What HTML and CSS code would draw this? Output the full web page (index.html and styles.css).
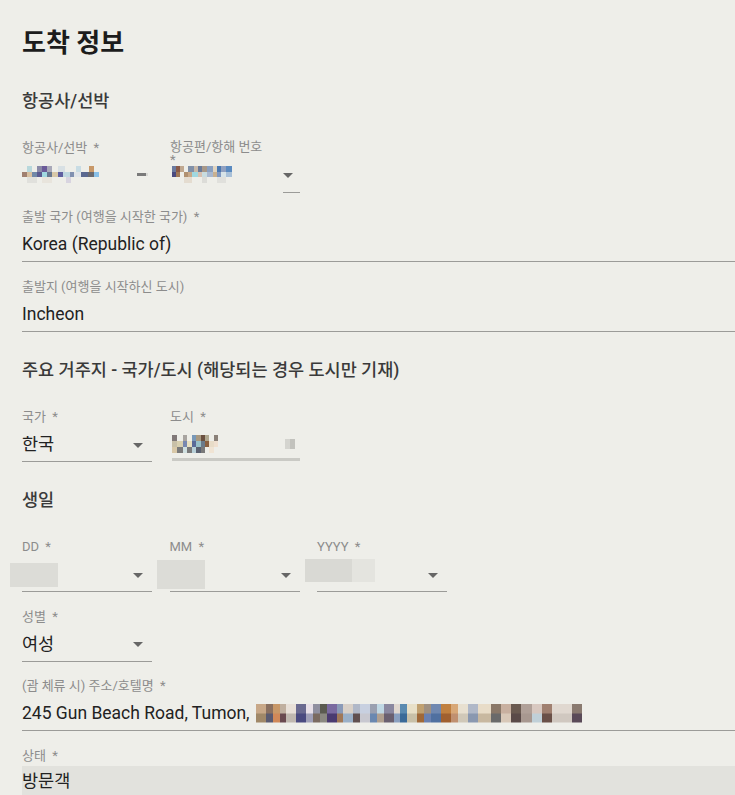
FILE: index.html
```html
<!DOCTYPE html>
<html lang="ko">
<head>
<meta charset="utf-8">
<title>도착 정보</title>
<link rel="stylesheet" href="styles.css">
</head>
<body>
<div class="page">
  <h1 class="title">도착 정보</h1>

  <h2 class="section">항공사/선박</h2>
  <div class="row">
    <div class="field">
      <div class="label">항공사/선박 <span class="req">*</span></div>
      <div class="value no-line"><span class="mosaic m-airline"></span><span class="dash"></span></div>
    </div>
    <div class="field">
      <div class="label label-wrap">항공편/항해 번호 *</div>
      <div class="value stub"><span class="mosaic m-flight"></span><span class="arrow"></span></div>
    </div>
  </div>

  <div class="field">
    <div class="label">출발 국가 (여행을 시작한 국가) <span class="req">*</span></div>
    <div class="value">Korea (Republic of)</div>
  </div>

  <div class="field">
    <div class="label">출발지 (여행을 시작하신 도시)</div>
    <div class="value">Incheon</div>
  </div>

  <h2 class="section">주요 거주지 - 국가/도시 (해당되는 경우 도시만 기재)</h2>
  <div class="row">
    <div class="field">
      <div class="label">국가 <span class="req">*</span></div>
      <div class="value select">한국<span class="arrow"></span></div>
    </div>
    <div class="field">
      <div class="label">도시 <span class="req">*</span></div>
      <div class="value light-line"><span class="mosaic m-city"></span><span class="ghost"></span></div>
    </div>
  </div>

  <h2 class="section">생일</h2>
  <div class="row row3">
    <div class="field">
      <div class="label">DD <span class="req">*</span></div>
      <div class="value select"><span class="arrow"></span></div>
      <span class="cover cover-dd"></span>
    </div>
    <div class="field">
      <div class="label">MM <span class="req">*</span></div>
      <div class="value select"><span class="arrow"></span></div>
      <span class="cover cover-mm"></span>
    </div>
    <div class="field">
      <div class="label">YYYY <span class="req">*</span></div>
      <div class="value select"><span class="arrow"></span></div>
      <span class="cover cover-yy"></span>
    </div>
  </div>

  <div class="row">
    <div class="field">
      <div class="label">성별 <span class="req">*</span></div>
      <div class="value select">여성<span class="arrow"></span></div>
    </div>
  </div>

  <div class="field">
    <div class="label">(괌 체류 시) 주소/호텔명 <span class="req">*</span></div>
    <div class="value nowrap">245 Gun Beach Road, Tumon, <span class="mosaic m-addr"></span></div>
  </div>

  <div class="field">
    <div class="label">상태 <span class="req">*</span></div>
    <div class="value filled">방문객</div>
  </div>
</div>
</body>
</html>
```

FILE: styles.css
```css
* { box-sizing: border-box; }

html, body {
  margin: 0;
  background: #eeeee9;
}

body {
  font-family: Roboto, "Noto Sans CJK KR", sans-serif;
  color: #222;
}

.page {
  padding: 27px 0 0 22px;
  height: 795px;
  overflow: hidden;
}

.title {
  margin: 0 0 29.5px;
  font-size: 26px;
  line-height: 32px;
  font-weight: 700;
  color: #1c1c1c;
}

.section {
  margin: 26px 0 27px;
  font-size: 17.5px;
  line-height: 24px;
  font-weight: 500;
  color: #3a3a3a;
}

.row {
  display: grid;
  grid-template-columns: 130px 130px;
  column-gap: 18px;
  margin-bottom: 16.5px;
}

.row3 {
  grid-template-columns: 130px 130px 130px;
  column-gap: 17.5px;
}

.field {
  position: relative;
  margin-bottom: 17px;
}

.row .field { margin-bottom: 0; }

.label {
  height: 16px;
  font-size: 13px;
  line-height: 16px;
  color: #8c8c8c;
  white-space: nowrap;
}

.req { margin-left: 3px; }

.label-wrap {
  width: 100px;
  white-space: normal;
  line-height: 13px;
}

.value {
  display: flex;
  align-items: center;
  margin-top: 7px;
  height: 30px;
  padding-bottom: 5px;
  font-size: 17.5px;
  line-height: 24px;
  color: #222;
  border-bottom: 1px solid #9b9b98;
}

.nowrap { white-space: pre; }

.value.no-line { border-bottom-color: transparent; }

.value.stub {
  border-bottom-color: transparent;
  background: linear-gradient(#9b9b98, #9b9b98) right bottom / 17px 1px no-repeat;
  background-origin: border-box;
}

.value.light-line {
  border-bottom: 3px solid #cacac5;
  margin-left: 2px;
  height: 29px;
  padding-bottom: 2px;
}

.value.filled {
  margin-top: 1.5px;
  height: 40px;
  padding: 3.5px 0 0;
  align-items: flex-start;
  border-bottom: none;
  background: #e2e2dd;
}

.arrow {
  margin-left: auto;
  margin-right: 9px;
  margin-top: 2px;
  width: 0;
  height: 0;
  border-left: 5px solid transparent;
  border-right: 5px solid transparent;
  border-top: 5px solid #666;
}

.stub .arrow { margin-right: 7px; }

.dash {
  margin-left: auto;
  margin-right: 6px;
  width: 9px;
  height: 3px;
  background: #7a7a7a;
  box-shadow: 2px 0 0 #d8d8d4;
}

.ghost {
  margin-left: auto;
  margin-right: 5px;
  width: 10px;
  height: 10px;
  background: linear-gradient(90deg, #d4d4cf 0 50%, #c2c2bd 50%);
}

.cover {
  position: absolute;
  background: #dcdcd7;
}
.cover-dd { left: -12px; top: 24px; width: 48px; height: 24px; }
.cover-mm { left: -13px; top: 21px; width: 48px; height: 29px; }
.cover-yy {
  left: -12px; top: 20px; width: 70px; height: 23px;
  background: linear-gradient(90deg, #d9d9d4 0 67%, #e4e4df 67%);
}

.mosaic {
  display: inline-block;
  flex: none;
  background-repeat: no-repeat;
  background-size: 100% 34%;
  background-position: 0 0, 0 50%, 0 100%;
}

.m-airline {
  width: 82px;
  height: 18px;
  background-image:
    linear-gradient(90deg, #eeeee9 0 6%, #b8d8dc 6% 12%, #eeeee9 12% 18%, #8a8aa8 18% 24%, #6a5a98 24% 30%, #a8a8b8 30% 36%, #eeeee9 36% 44%, #d8e0e4 44% 52%, #eeeee9 52% 66%, #c8dce4 66% 72%, #eeeee9 72% 82%, #c89868 82% 88%, #eeeee9 88% 100%),
    linear-gradient(90deg, #a08070 0 6%, #d8c0a0 6% 12%, #7088a8 12% 18%, #5a5a90 18% 24%, #a0d8e0 24% 30%, #687890 30% 36%, #d8c8a8 36% 44%, #6060a0 44% 50%, #c0d8e0 50% 58%, #8090b0 58% 64%, #e0e4e8 64% 72%, #5a6890 72% 80%, #6a6a70 80% 88%, #88c0e8 88% 94%, #eeeee9 94%),
    linear-gradient(90deg, #eeeee9 0 6%, #e0e0dc 6% 18%, #eeeee9 18% 24%, #e8e4dc 24% 36%, #eeeee9 36% 54%, #d8d4e0 54% 60%, #eeeee9 60% 100%);
}

.m-flight {
  width: 68px;
  height: 18px;
  margin-left: 2px;
  background-image:
    linear-gradient(90deg, #6a7aa0 0 6%, #8a5a48 6% 12%, #c0a890 12% 18%, #eeeee9 18% 24%, #8090a8 24% 32%, #c8b8a8 32% 38%, #6a7a98 38% 44%, #a89888 44% 52%, #8aa0c0 52% 60%, #e0d4c0 60% 66%, #4a78b0 66% 72%, #90a0c0 72% 80%, #5a8ac0 80% 88%, #eeeee9 88%),
    linear-gradient(90deg, #4a4a80 0 6%, #a07858 6% 12%, #eeeee9 12% 18%, #b09070 18% 24%, #c8a888 24% 30%, #a0d8e0 30% 38%, #d8c0b0 38% 44%, #c8dce0 44% 52%, #a8b8d0 52% 60%, #c8b090 60% 66%, #8098c0 66% 72%, #d8e4e8 72% 80%, #a8c0d8 80% 88%, #eeeee9 88%),
    linear-gradient(90deg, #eeeee9 0 18%, #e4dcd0 18% 30%, #eeeee9 30% 44%, #dcdcd8 44% 52%, #eeeee9 52% 66%, #e0e0dc 66% 80%, #eeeee9 80%);
}

.m-city {
  width: 68px;
  height: 18px;
  background-image:
    linear-gradient(90deg, #807878 0 8%, #eeeee9 8% 16%, #a8a4a0 16% 22%, #eeeee9 22% 30%, #7898b8 30% 36%, #a89880 36% 42%, #6a5040 42% 48%, #b0a890 48% 54%, #eeeee9 54% 62%, #8a8078 62% 68%, #eeeee9 68% 100%),
    linear-gradient(90deg, #c8c0a8 0 8%, #d8d0b0 8% 16%, #7888b0 16% 22%, #e8e0c0 22% 30%, #5a6a98 30% 36%, #98c0c8 36% 42%, #6a7a8a 42% 48%, #8a6040 48% 54%, #e8dcc8 54% 62%, #f0e0d0 62% 68%, #eeeee9 68%),
    linear-gradient(90deg, #d8c8a8 0 8%, #7a7a7a 8% 16%, #d0e0e0 16% 22%, #7a7a7a 22% 30%, #b8d0d8 30% 36%, #5a6070 36% 42%, #7a7a7a 42% 48%, #eeeee9 48% 54%, #f0e4d4 54% 62%, #eeeee9 62%);
}

.m-addr {
  width: 336px;
  height: 19px;
  margin-left: 2px;
  background-size: 100% 50%;
  background-position: 0 0, 0 100%;
  background-image:
    linear-gradient(90deg, #c8a888 0 3%, #8a7060 3% 5%, #c89868 5% 7%, #c0b0a0 7% 9%, #e8e0d8 9% 12%, #6a6a90 12% 15%, #e8e0e8 15% 17%, #9090a0 17% 19%, #5a5a50 19% 21%, #7a6aa0 21% 24%, #8a9ab8 24% 26%, #d8d0c8 26% 29%, #b0b8c8 29% 31%, #c8d0e0 31% 34%, #9aa0b0 34% 36%, #c0d8e4 36% 38%, #8a88a0 38% 41%, #e0d8d0 41% 43%, #5a8ab0 43% 45%, #e8e0c8 45% 48%, #c0a070 48% 50%, #a09080 50% 52%, #7088b0 52% 55%, #c08040 55% 58%, #d8a878 58% 60%, #e8e0d0 60% 63%, #b0b8c8 63% 66%, #e8dcc8 66% 70%, #8a7868 70% 73%, #c8b0a0 73% 76%, #6a5a50 76% 79%, #b0a098 79% 82%, #d8c8c0 82% 85%, #a08070 85% 88%, #e0d8d0 88% 94%, #8a7a70 94% 97%, #eeeee9 97%),
    linear-gradient(90deg, #a08868 0 3%, #5a5a70 3% 5%, #d08858 5% 7%, #6a4a50 7% 9%, #c0b8b0 9% 12%, #4a4a80 12% 15%, #a0a0b8 15% 17%, #7a6a60 17% 19%, #8a8880 19% 21%, #4a3a70 21% 24%, #a07858 24% 26%, #9ab0c8 26% 29%, #605050 29% 31%, #c8c8d0 31% 34%, #6a88b0 34% 36%, #b0a090 36% 38%, #6a6070 38% 41%, #8aa0c0 41% 43%, #3a6a98 43% 45%, #c8c0a8 45% 48%, #a06838 48% 50%, #6a80b0 50% 52%, #5070a0 52% 55%, #a06030 55% 58%, #c09070 58% 60%, #d0c8b8 60% 63%, #8a98b0 63% 66%, #c8b8a0 66% 70%, #6a6a6a 70% 73%, #d8c8b8 73% 76%, #5a4a48 76% 79%, #a89890 79% 82%, #c0d0d8 82% 85%, #6a5048 85% 88%, #d0c8c0 88% 94%, #5a4a58 94% 97%, #eeeee9 97%);
}
```
